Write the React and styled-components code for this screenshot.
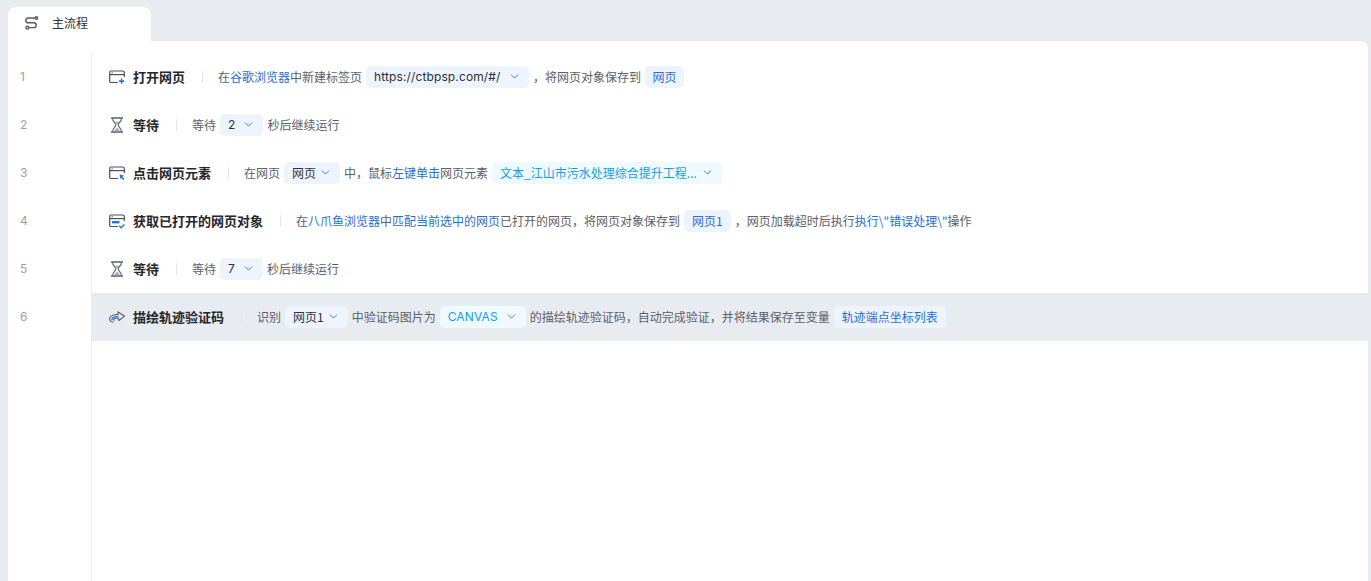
import React from "react";
import styled, { createGlobalStyle } from "styled-components";
import { ChevronDown } from "lucide-react";

const GlobalStyle = createGlobalStyle`
  html, body {
    margin: 0;
    height: 100%;
    background: #e8ebf0;
  }
  body {
    font-family: "Noto Sans CJK SC", "Inter", sans-serif;
    font-size: 12px;
    color: #5a606b;
    overflow: hidden;
  }
`;

const Page = styled.div`
  height: 581px;
  padding: 7px 3px 0 8px;
  box-sizing: border-box;
  display: flex;
  flex-direction: column;
`;

const TabBar = styled.div`
  display: flex;
  height: 34px;
  flex-shrink: 0;
`;

const Tab = styled.div`
  width: 143px;
  box-sizing: border-box;
  padding: 0 0 3px 15px;
  display: flex;
  align-items: center;
  gap: 13px;
  background: #fff;
  border-radius: 8px 8px 0 0;
  color: #2c3038;
`;

const Panel = styled.div`
  flex: 1;
  display: flex;
  background: #fff;
  border-radius: 0 8px 0 0;
  padding-top: 12px;
`;

const Gutter = styled.div`
  width: 83px;
  flex-shrink: 0;
  border-right: 1px solid #eceef2;
`;

const LineNo = styled.div`
  height: 48px;
  line-height: 48px;
  padding-left: 12px;
  color: #9a9fa7;
  font-size: 12px;
  font-family: "Inter", sans-serif;
`;

const Rows = styled.div`
  flex: 1;
  min-width: 0;
`;

const Row = styled.div`
  height: 48px;
  box-sizing: border-box;
  display: flex;
  align-items: center;
  padding: 0 0 2px 17px;
  background: ${(p) => (p.$active ? "#e8ebf0" : "transparent")};
  white-space: nowrap;
`;

const IconBox = styled.span`
  width: 16px;
  height: 16px;
  display: flex;
  margin: 2px 8px 0 0;
  flex-shrink: 0;
`;

const Title = styled.span`
  font-size: 13px;
  font-weight: 700;
  color: #23262d;
`;

const Divider = styled.span`
  width: 1px;
  height: 12px;
  background: #e2e5ea;
  margin: 2px 15px 0 17px;
`;

const Link = styled.span`
  color: #1f6fd6;
`;

const Chip = styled.span`
  display: inline-flex;
  align-items: center;
  height: 22px;
  box-sizing: border-box;
  margin: 2px 4px 0;
  padding: 0 ${(p) => p.$pad ?? 8}px 1px;
  gap: ${(p) => p.$gap ?? 3}px;
  border-radius: 5px;
  background: ${(p) => (p.$tone === "cyan" ? "#eefaff" : "#eef4fd")};
  color: ${(p) =>
    p.$tone === "cyan" ? "#14a0e6" : p.$tone === "blue" ? "#1f6fd6" : "#2c3038"};
  font-size: 12px;
  font-family: ${(p) => (p.$latin ? '"Inter", "Noto Sans CJK SC", sans-serif' : "inherit")};
  letter-spacing: ${(p) => (p.$latin ? "0.12px" : "0")};

  svg {
    color: #5d6470;
    flex-shrink: 0;
  }
`;

const Select = ({ children, gap, pad, tone, latin }) => (
  <Chip $gap={gap} $pad={pad} $tone={tone} $latin={latin}>
    {children}
    <ChevronDown size={13} strokeWidth={1.6} />
  </Chip>
);

const FlowIcon = () => (
  <svg width="16" height="16" viewBox="0 0 16 16" fill="none" stroke="#555b66" strokeWidth="1.4" strokeLinecap="round">
    <path d="M12 3H5.200a2.400 2.400 0 0 0 0 4.800h5.600a2.400 2.400 0 0 1 0 4.800H6" />
    <circle cx="13.400" cy="3" r="1.300" />
    <circle cx="4.400" cy="12.600" r="1.500" />
  </svg>
);

const BrowserFrame = ({ children }) => (
  <svg width="16" height="16" viewBox="0 0 16 16" fill="none">
    <path
      d="M15.300 8V3.200a1.200 1.200 0 0 0-1.200-1.200H1.900A1.200 1.200 0 0 0 .7 3.200v9.100a1.200 1.200 0 0 0 1.200 1.200h7"
      stroke="#4b515c"
      strokeWidth="1.200"
    />
    <path d="M.7 5.600h14.600" stroke="#4b515c" strokeWidth="1.200" />
    <path d="M2.600 3.800h1.200" stroke="#4b515c" strokeWidth="1" />
    {children}
  </svg>
);

const OpenIcon = () => (
  <BrowserFrame>
    <path d="M12.600 9.600v5M10.100 12.100h5" stroke="#1f7ae0" strokeWidth="1.600" />
  </BrowserFrame>
);

const ClickIcon = () => (
  <BrowserFrame>
    <path d="M10.600 9.200l4.800 1.600-2 .9 2 2.200-1.200 1-2-2.100-.8 1.700z" fill="#1f7ae0" />
  </BrowserFrame>
);

const FetchIcon = () => (
  <BrowserFrame>
    <path d="M3 8h7.500v2.400H3z" fill="#1f7ae0" />
    <path d="M10.200 13l2 1.800 3.300-3.400" stroke="#1f7ae0" strokeWidth="1.400" />
  </BrowserFrame>
);

const HourglassIcon = () => (
  <svg width="16" height="16" viewBox="0 0 16 16" fill="none" stroke="#5a606b" strokeWidth="1.100">
    <path d="M2 1h12M2 15h12" strokeWidth="1.300" />
    <path d="M3.600 1.400c0 3.400 3.200 4.600 3.200 6.600S3.600 11.200 3.600 14.600M12.400 1.400c0 3.400-3.200 4.600-3.200 6.600s3.200 3.200 3.200 6.600" />
    <path d="M5.400 4.600h5.200L8 7.400zM5 14l3-3.400 3 3.400z" fill="#a9adb4" stroke="none" />
  </svg>
);

const TraceIcon = () => (
  <svg width="16" height="16" viewBox="0 0 16 16" fill="none" stroke="#5a606b" strokeWidth="1.100">
    <path d="M4.500 13C1.800 13 .3 11.400.7 9.500 1.100 7.500 3.400 6.200 6 5.800l3-.4V3l6.500 4.200-5.500 4.300-.6-2.500-3.400.5c-1.300.2-1.600 1.400-.7 2.100" />
    <path d="M2.800 10.800c.2-1.500 1.600-2.500 3.400-2.900l3.200-.5" stroke="#1f7ae0" strokeWidth="1.300" />
  </svg>
);

export default function App() {
  return (
    <>
      <GlobalStyle />
      <Page>
        <TabBar>
          <Tab>
            <FlowIcon />
            主流程
          </Tab>
        </TabBar>
        <Panel>
          <Gutter>
            {[1, 2, 3, 4, 5, 6].map((n) => (
              <LineNo key={n}>{n}</LineNo>
            ))}
          </Gutter>
          <Rows>
            <Row>
              <IconBox><OpenIcon /></IconBox>
              <Title>打开网页</Title>
              <Divider />
              在<Link>谷歌浏览器</Link>中新建标签页
              <Select latin gap={7.500}>https://ctbpsp.com/#/</Select>
              ，将网页对象保存到
              <Chip $tone="blue" $pad={7.500}>网页</Chip>
            </Row>
            <Row>
              <IconBox><HourglassIcon /></IconBox>
              <Title>等待</Title>
              <Divider />
              等待
              <Select latin gap={7}>2</Select>
              秒后继续运行
            </Row>
            <Row>
              <IconBox><ClickIcon /></IconBox>
              <Title>点击网页元素</Title>
              <Divider />
              在网页
              <Select>网页</Select>
              中，鼠标<Link>左键单击</Link>网页元素
              <Select tone="cyan" gap={4}>文本_江山市污水处理综合提升工程...</Select>
            </Row>
            <Row>
              <IconBox><FetchIcon /></IconBox>
              <Title>获取已打开的网页对象</Title>
              <Divider />
              在<Link>八爪鱼浏览器</Link>中<Link>匹配当前选中的网页</Link>已打开的网页，将网页对象保存到
              <Chip $tone="blue">网页1</Chip>
              ，网页加载超时后执行<Link>执行\"错误处理\"</Link>操作
            </Row>
            <Row>
              <IconBox><HourglassIcon /></IconBox>
              <Title>等待</Title>
              <Divider />
              等待
              <Select latin gap={7}>7</Select>
              秒后继续运行
            </Row>
            <Row $active>
              <IconBox><TraceIcon /></IconBox>
              <Title>描绘轨迹验证码</Title>
              <Divider />
              识别
              <Select>网页1</Select>
              中验证码图片为
              <Select latin tone="cyan" gap={7}>CANVAS</Select>
              的描绘轨迹验证码，自动完成验证，并将结果保存至变量
              <Chip $tone="blue">轨迹端点坐标列表</Chip>
            </Row>
          </Rows>
        </Panel>
      </Page>
    </>
  );
}
